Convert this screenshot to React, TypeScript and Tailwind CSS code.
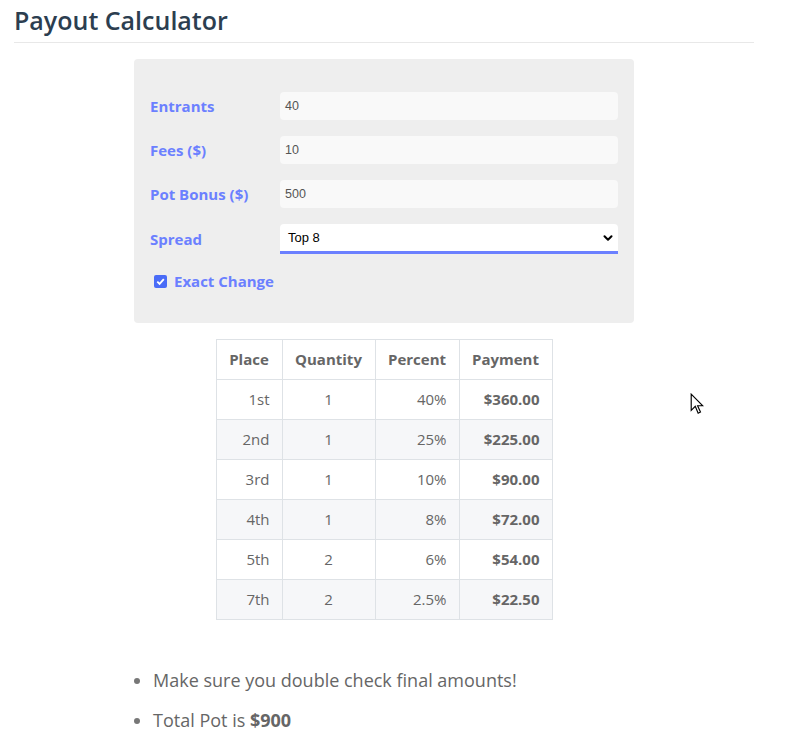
import { ChevronDown } from "lucide-react";

const rows = [
  { place: "1st", qty: 1, pct: "40%", pay: "$360.00" },
  { place: "2nd", qty: 1, pct: "25%", pay: "$225.00" },
  { place: "3rd", qty: 1, pct: "10%", pay: "$90.00" },
  { place: "4th", qty: 1, pct: "8%", pay: "$72.00" },
  { place: "5th", qty: 2, pct: "6%", pay: "$54.00" },
  { place: "7th", qty: 2, pct: "2.5%", pay: "$22.50" },
];

const fields = [
  { label: "Entrants", value: "40" },
  { label: "Fees ($)", value: "10" },
  { label: "Pot Bonus ($)", value: "500" },
];

export default function App() {
  return (
    <div
      className="relative min-h-[739px] bg-white px-[14px] text-[#666]"
      style={{ fontFamily: '"Segoe UI", "Open Sans", sans-serif' }}
    >
      <div className="w-[740px]">
        <h1 className="border-b border-[#e8e8e8] pt-[3px] pb-[4px] text-[25px] font-semibold leading-[35px] text-[#2c3e50]">
          Payout Calculator
        </h1>

        {/* Form panel */}
        <div className="mx-auto mt-4 w-[500px] rounded bg-[#eeeeee] px-4 pt-[33px] pb-[30px]">
          <div className="flex flex-col gap-4">
            {fields.map((f) => (
              <div key={f.label} className="flex items-center">
                <label className="w-[130px] text-[15px] font-bold text-[#6b80ff]">{f.label}</label>
                <div
                  className="flex h-[28px] flex-1 items-center rounded bg-[#f9f9f9] px-[5px] text-[12.5px] text-[#555]"
                  style={{ fontFamily: '"Liberation Sans", Arial, sans-serif' }}
                >
                  {f.value}
                </div>
              </div>
            ))}
            <div className="flex items-center">
              <label className="w-[130px] text-[15px] font-bold text-[#6b80ff]">Spread</label>
              <div
                className="flex h-[30px] flex-1 items-center justify-between rounded-t border-b-[3px] border-[#6b80ff] bg-white pl-[8px] pr-[3px] text-[13px] text-black"
                style={{ fontFamily: '"Liberation Sans", Arial, sans-serif' }}
              >
                <span>Top 8</span>
                <ChevronDown className="h-[14px] w-[14px]" strokeWidth={3.5} />
              </div>
            </div>
          </div>
          <div className="mt-[16px] flex items-center gap-[7px] pl-[4px]">
            <span className="flex h-[13px] w-[13px] items-center justify-center rounded-[2px] bg-[#4a6cf7]">
              <svg viewBox="0 0 12 12" className="h-[11px] w-[11px]">
                <path d="M2.5 6.2 L5 8.6 L9.6 3.4" fill="none" stroke="white" strokeWidth="2" />
              </svg>
            </span>
            <span className="text-[15px] font-bold text-[#6b80ff]">Exact Change</span>
          </div>
        </div>

        {/* Table */}
        <table className="mx-auto mt-4 border-collapse text-[15px]">
          <thead>
            <tr className="h-[40px]">
              <th className="w-[66px] border border-[#dee2e6] px-3 font-bold">Place</th>
              <th className="w-[93px] border border-[#dee2e6] px-3 font-bold">Quantity</th>
              <th className="w-[84px] border border-[#dee2e6] px-3 font-bold">Percent</th>
              <th className="w-[93px] border border-[#dee2e6] px-3 font-bold">Payment</th>
            </tr>
          </thead>
          <tbody>
            {rows.map((r, i) => (
              <tr key={r.place} className={`h-[40px] ${i % 2 === 1 ? "bg-[#f6f7f9]" : "bg-white"}`}>
                <td className="border border-[#dee2e6] px-3 text-right">{r.place}</td>
                <td className="border border-[#dee2e6] px-3 text-center">{r.qty}</td>
                <td className="border border-[#dee2e6] px-3 text-right">{r.pct}</td>
                <td className="border border-[#dee2e6] px-3 text-right font-bold">{r.pay}</td>
              </tr>
            ))}
          </tbody>
        </table>

        {/* Notes */}
        <ul className="mt-[40px] ml-[139px] list-disc pl-[0px] text-[18px] leading-[40px] marker:text-[#777]">
          <li>Make sure you double check final amounts!</li>
          <li>
            Total Pot is <b>$900</b>
          </li>
        </ul>
      </div>

      {/* mouse cursor */}
      <svg className="absolute left-[690px] top-[393px] h-[22px] w-[14px]" viewBox="0 0 12 19">
        <path d="M1 1 L1 15 L4.5 11.5 L7 17.5 L9 16.5 L6.5 11 L11 11 Z" fill="white" stroke="black" strokeWidth="1" />
      </svg>
    </div>
  );
}
